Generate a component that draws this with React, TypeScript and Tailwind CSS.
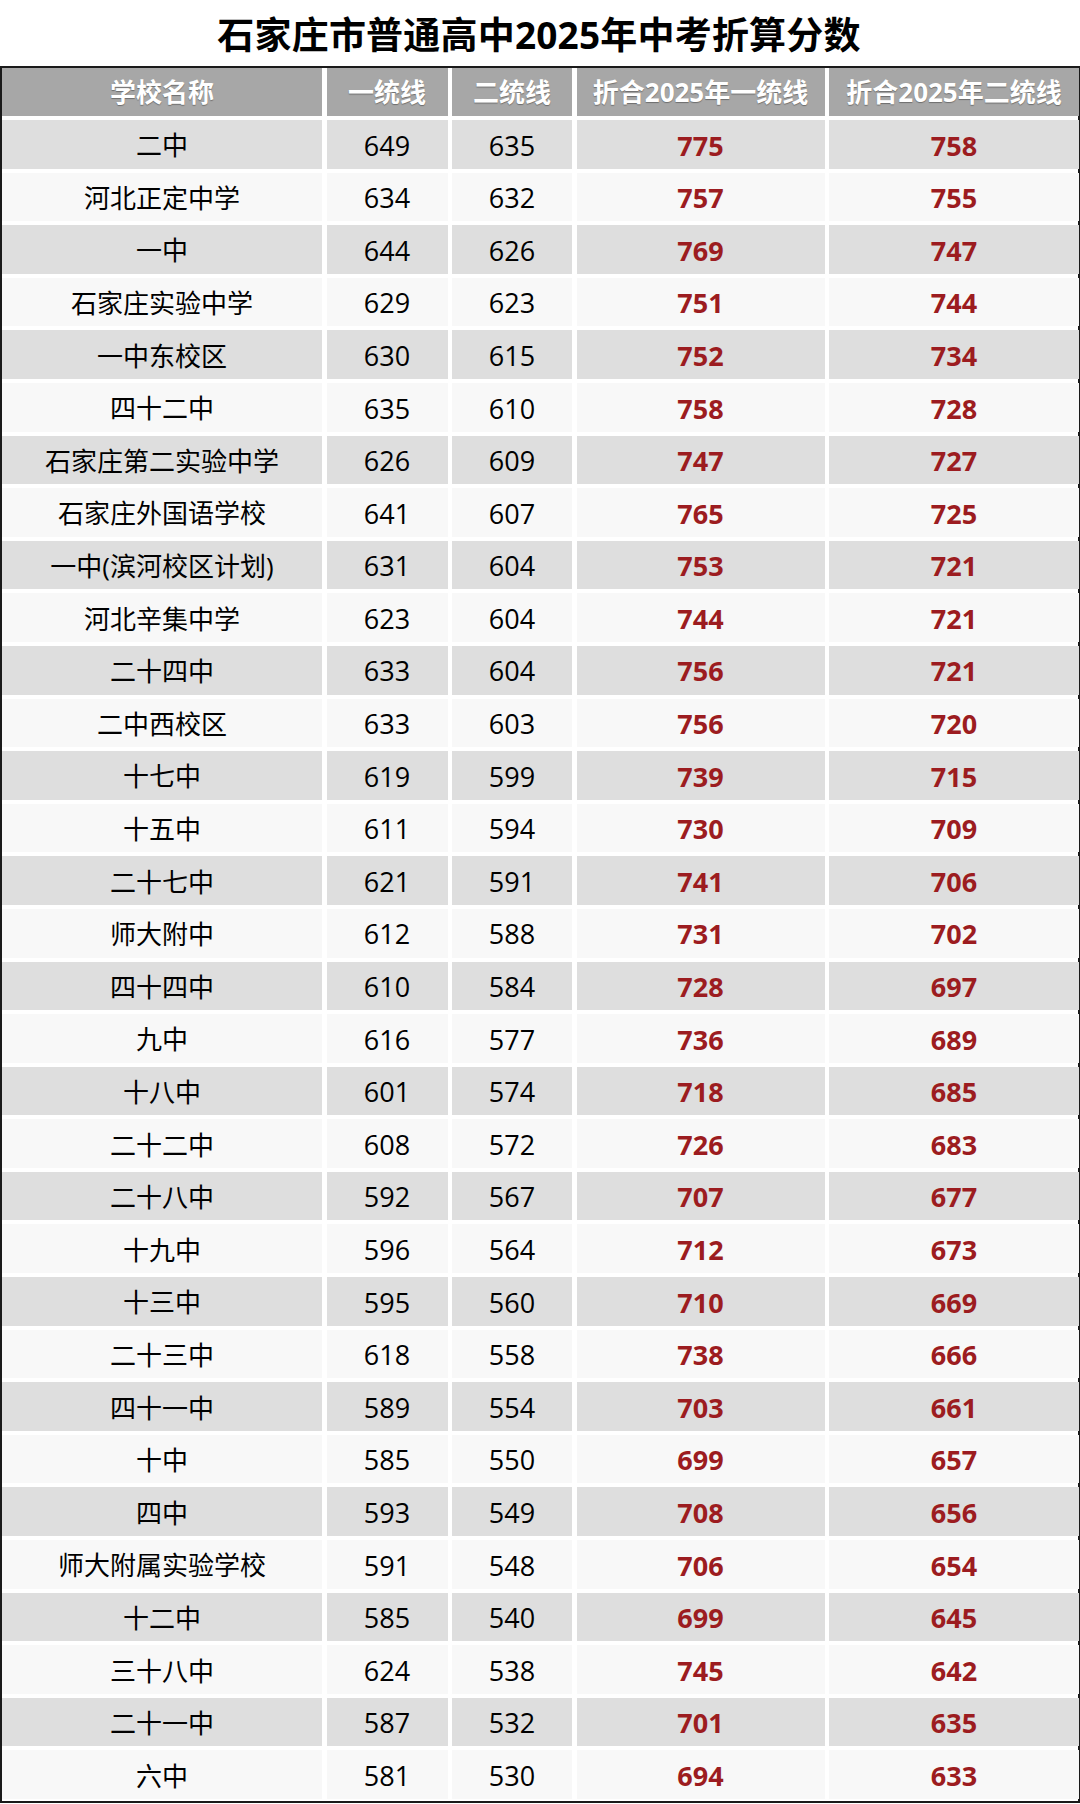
const HEADERS = ['学校名称', '一统线', '二统线', '折合2025年一统线', '折合2025年二统线'];

type Row = [string, number, number, number, number];

const ROWS: Row[] = [
  ['二中', 649, 635, 775, 758],
  ['河北正定中学', 634, 632, 757, 755],
  ['一中', 644, 626, 769, 747],
  ['石家庄实验中学', 629, 623, 751, 744],
  ['一中东校区', 630, 615, 752, 734],
  ['四十二中', 635, 610, 758, 728],
  ['石家庄第二实验中学', 626, 609, 747, 727],
  ['石家庄外国语学校', 641, 607, 765, 725],
  ['一中(滨河校区计划)', 631, 604, 753, 721],
  ['河北辛集中学', 623, 604, 744, 721],
  ['二十四中', 633, 604, 756, 721],
  ['二中西校区', 633, 603, 756, 720],
  ['十七中', 619, 599, 739, 715],
  ['十五中', 611, 594, 730, 709],
  ['二十七中', 621, 591, 741, 706],
  ['师大附中', 612, 588, 731, 702],
  ['四十四中', 610, 584, 728, 697],
  ['九中', 616, 577, 736, 689],
  ['十八中', 601, 574, 718, 685],
  ['二十二中', 608, 572, 726, 683],
  ['二十八中', 592, 567, 707, 677],
  ['十九中', 596, 564, 712, 673],
  ['十三中', 595, 560, 710, 669],
  ['二十三中', 618, 558, 738, 666],
  ['四十一中', 589, 554, 703, 661],
  ['十中', 585, 550, 699, 657],
  ['四中', 593, 549, 708, 656],
  ['师大附属实验学校', 591, 548, 706, 654],
  ['十二中', 585, 540, 699, 645],
  ['三十八中', 624, 538, 745, 642],
  ['二十一中', 587, 532, 701, 635],
  ['六中', 581, 530, 694, 633],
];

const GRID = 'grid grid-cols-[320px_121px_120px_248px_250px] gap-x-[4.5px]';
const CELL = 'flex items-center justify-center pt-[3px]';

export default function App() {
  return (
    <div className="w-[1080px] h-[1804px] bg-white font-['Open_Sans','Noto_Sans_CJK_SC',sans-serif] overflow-hidden">
      <div className="h-[66px] flex items-center justify-center pr-[2px] pt-[2px]">
        <h1 className="text-[37px] font-bold leading-none text-black tracking-[0.2px]">
          石家庄市普通高中2025年中考折算分数
        </h1>
      </div>

      <div className="border-2 border-[#1a1a1a] bg-white pb-[2px]">
        <div className={`${GRID} h-[48px]`}>
          {HEADERS.map((h) => (
            <div
              key={h}
              className="flex items-center justify-center bg-[#a7a7a7] text-[26px] font-bold text-white [text-shadow:0_1px_1px_rgba(0,0,0,0.35)]"
            >
              {h}
            </div>
          ))}
        </div>

        <div className="mt-[4px] flex flex-col gap-y-[4px]">
          {ROWS.map((row, i) => {
            const bg = i % 2 === 0 ? 'bg-[#dedede]' : 'bg-[#f8f8f8]';
            return (
              <div key={row[0]} className={`${GRID} h-[48.6px]`}>
                <div className={`${bg} ${CELL} text-[26px] text-black`}>{row[0]}</div>
                <div className={`${bg} ${CELL} text-[27px] text-black`}>{row[1]}</div>
                <div className={`${bg} ${CELL} text-[27px] text-black`}>{row[2]}</div>
                <div className={`${bg} ${CELL} text-[27px] font-bold text-[#9c1c20]`}>{row[3]}</div>
                <div className={`${bg} ${CELL} text-[27px] font-bold text-[#9c1c20]`}>{row[4]}</div>
              </div>
            );
          })}
        </div>
      </div>
    </div>
  );
}
